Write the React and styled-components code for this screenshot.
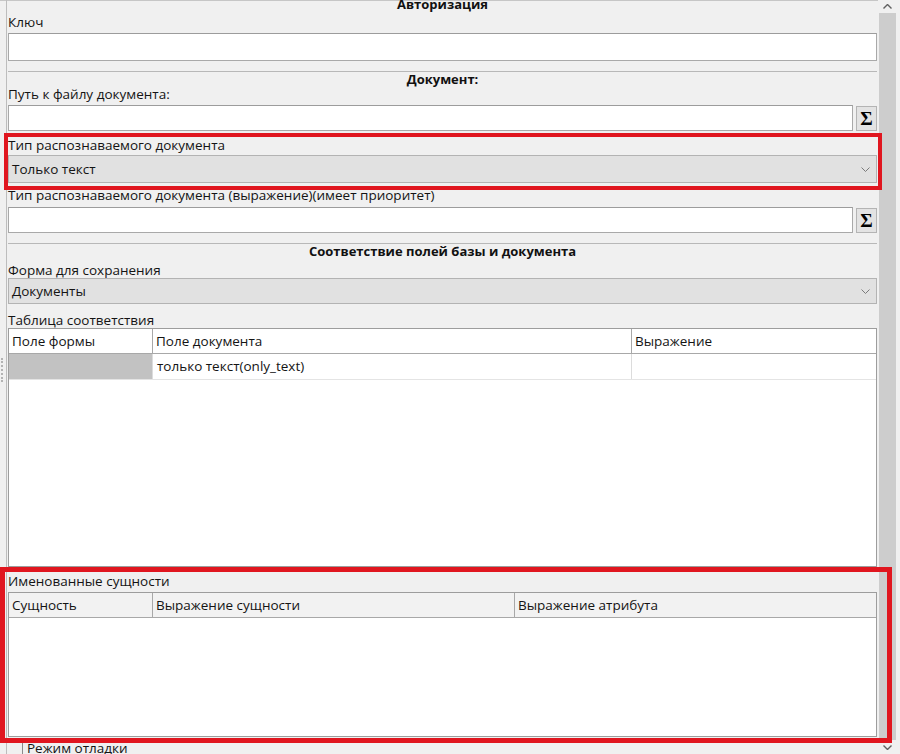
import React from 'react';
import styled, { createGlobalStyle } from 'styled-components';

const GlobalStyle = createGlobalStyle`
  html, body {
    margin: 0;
    padding: 0;
    background: #f0f0f0;
  }
  body {
    font-family: "Open Sans", "Noto Sans", sans-serif;
    font-size: 13.5px;
    color: #141414;
  }
`;

const Window = styled.div`
  position: relative;
  display: flex;
  align-items: flex-start;
  width: 900px;
  height: 754px;
  overflow: hidden;
  background: #f0f0f0;
  box-shadow: inset 0 1px 0 #c6c6c6;
`;

const Content = styled.div`
  width: 869px;
  height: 770px;
  margin: -4px 0 0 6px;
  padding: 0 1px;
  border-left: 1px solid #bdbdbd;
  display: flex;
  flex-direction: column;
  flex-shrink: 0;
`;

const SectionHeader = styled.div`
  flex: none;
  margin-top: ${(p) => p.$mt || 0}px;
  border-top: 1px solid #b8b8b8;
  height: 14px;
  line-height: 14px;
  text-align: center;
  font-size: 13px;
  font-weight: 700;
  color: #111;
`;

const Label = styled.div`
  flex: none;
  margin-top: ${(p) => p.$mt || 0}px;
  height: 15px;
  line-height: 15px;
  white-space: nowrap;
`;

const TextInput = styled.div`
  flex: ${(p) => (p.$grow ? '1 1 auto' : 'none')};
  margin-top: ${(p) => p.$mt || 0}px;
  box-sizing: border-box;
  height: ${(p) => p.$h || 26}px;
  background: #fff;
  border: 1px solid #a9a9a9;
  border-top-color: #9c9c9c;
`;

const InputRow = styled.div`
  flex: none;
  margin-top: ${(p) => p.$mt || 0}px;
  display: flex;
  gap: 3px;
  align-items: flex-start;
  height: 26px;
`;

const SigmaButton = styled.div`
  flex: none;
  box-sizing: border-box;
  width: 21px;
  height: 25px;
  margin-top: 1px;
  background: #e3e3e3;
  border: 1px solid #b4b4b4;
  display: flex;
  align-items: center;
  justify-content: center;
  font-family: "Liberation Serif", "DejaVu Serif", serif;
  font-weight: 700;
  font-size: 19px;
  color: #000;
`;

const Combo = styled.div`
  flex: none;
  margin-top: ${(p) => p.$mt || 0}px;
  box-sizing: border-box;
  height: ${(p) => p.$h || 28}px;
  background: #e1e1e1;
  border: 1px solid #b3b3b3;
  display: flex;
  align-items: center;
  justify-content: space-between;
  padding: 0 6px 0 3px;
`;

const Table = styled.div`
  flex: none;
  margin-top: ${(p) => p.$mt || 0}px;
  box-sizing: border-box;
  height: ${(p) => p.$h}px;
  background: #fff;
  border: 1px solid #9d9d9d;
  display: flex;
  flex-direction: column;
`;

const HeaderRow = styled.div`
  flex: none;
  display: grid;
  grid-template-columns: ${(p) => p.$cols};
  height: 25px;
  box-sizing: border-box;
  border-bottom: 1px solid #a8a8a8;
  background: ${(p) => p.$bg || '#fff'};
`;

const HeaderCell = styled.div`
  padding-left: 3px;
  line-height: 24px;
  white-space: nowrap;
  border-right: 1px solid #a8a8a8;
  &:last-child {
    border-right: none;
  }
`;

const DataRow = styled.div`
  flex: none;
  display: grid;
  grid-template-columns: ${(p) => p.$cols};
  height: 26px;
  box-sizing: border-box;
  border-bottom: 1px solid #e4e4e4;
`;

const DataCell = styled.div`
  padding-left: 4px;
  line-height: 25px;
  white-space: nowrap;
  background: ${(p) => (p.$selected ? '#c2c2c2' : '#fff')};
  border-right: 1px solid #dcdcdc;
  &:last-child {
    border-right: none;
  }
`;

const Footer = styled.div`
  flex: none;
  margin: 4px 0 0 14px;
  padding-left: 4px;
  border-left: 1px solid #8a8a8a;
  line-height: 15px;
  height: 20px;
`;

const Scrollbar = styled.div`
  width: 22px;
  height: 754px;
  flex-shrink: 0;
  display: flex;
  flex-direction: column;
  background: #f0f0f0;
`;

const ScrollArrow = styled.div`
  flex: none;
  height: ${(p) => p.$h}px;
  display: flex;
  align-items: center;
  padding-left: 5px;
`;

const Thumb = styled.div`
  flex: 1;
  width: 17px;
  margin-left: 1px;
  background: #cdcdcd;
`;

const Highlight = styled.div`
  position: absolute;
  box-sizing: border-box;
  border: ${(p) => p.$w}px solid #e0161f;
  pointer-events: none;
`;

const Grip = styled.div`
  position: absolute;
  left: 1px;
  top: 358px;
  height: 24px;
  border-left: 2px dotted #b3b3b3;
`;

const Chevron = () => (
  <svg width="9" height="5" viewBox="0 0 9 5">
    <polyline points="0.5,0.5 4.5,4.5 8.5,0.5" fill="none" stroke="#7a7a7a" strokeWidth="1" />
  </svg>
);

const Arrow = ({ up }) => (
  <svg width="9" height="5" viewBox="0 0 9 5">
    <polyline
      points={up ? '0.5,4.5 4.5,0.5 8.5,4.5' : '0.5,0.5 4.5,4.5 8.5,0.5'}
      fill="none"
      stroke="#606060"
      strokeWidth="1.4"
    />
  </svg>
);

const mapCols = '144px 479px 1fr';
const entityCols = '144px 362px 1fr';

export default function App() {
  return (
    <>
      <GlobalStyle />
      <Window>
        <Content>
          <SectionHeader>Авторизация</SectionHeader>
          <Label $mt={4}>Ключ</Label>
          <TextInput $mt={3} $h={28} />

          <SectionHeader $mt={10}>Документ:</SectionHeader>
          <Label $mt={1}>Путь к файлу документа:</Label>
          <InputRow $mt={3}>
            <TextInput $grow />
            <SigmaButton>Σ</SigmaButton>
          </InputRow>

          <Label $mt={7}>Тип распознаваемого документа</Label>
          <Combo $mt={2}>
            <span>Только текст</span>
            <Chevron />
          </Combo>
          <Label $mt={5}>Тип распознаваемого документа (выражение)(имеет приоритет)</Label>
          <InputRow $mt={4}>
            <TextInput $grow />
            <SigmaButton>Σ</SigmaButton>
          </InputRow>

          <SectionHeader $mt={10}>Соответствие полей базы и документа</SectionHeader>
          <Label $mt={5}>Форма для сохранения</Label>
          <Combo $h={26}>
            <span>Документы</span>
            <Chevron />
          </Combo>
          <Label $mt={9}>Таблица соответствия</Label>
          <Table $h={239}>
            <HeaderRow $cols={mapCols}>
              <HeaderCell>Поле формы</HeaderCell>
              <HeaderCell>Поле документа</HeaderCell>
              <HeaderCell>Выражение</HeaderCell>
            </HeaderRow>
            <DataRow $cols={mapCols}>
              <DataCell $selected />
              <DataCell>только текст(only_text)</DataCell>
              <DataCell />
            </DataRow>
          </Table>

          <Label $mt={7}>Именованные сущности</Label>
          <Table $mt={3} $h={145}>
            <HeaderRow $cols={entityCols} $bg="#f2f2f2">
              <HeaderCell>Сущность</HeaderCell>
              <HeaderCell>Выражение сущности</HeaderCell>
              <HeaderCell>Выражение атрибута</HeaderCell>
            </HeaderRow>
          </Table>
          <Footer>Режим отладки</Footer>
        </Content>

        <Scrollbar>
          <ScrollArrow $h={13}>
            <Arrow up />
          </ScrollArrow>
          <Thumb />
          <ScrollArrow $h={14}>
            <Arrow />
          </ScrollArrow>
        </Scrollbar>

        <Grip />
        <Highlight $w={4} style={{ left: 4, top: 133, width: 878, height: 57 }} />
        <Highlight $w={5} style={{ left: 0, top: 567, width: 892, height: 176 }} />
      </Window>
    </>
  );
}
